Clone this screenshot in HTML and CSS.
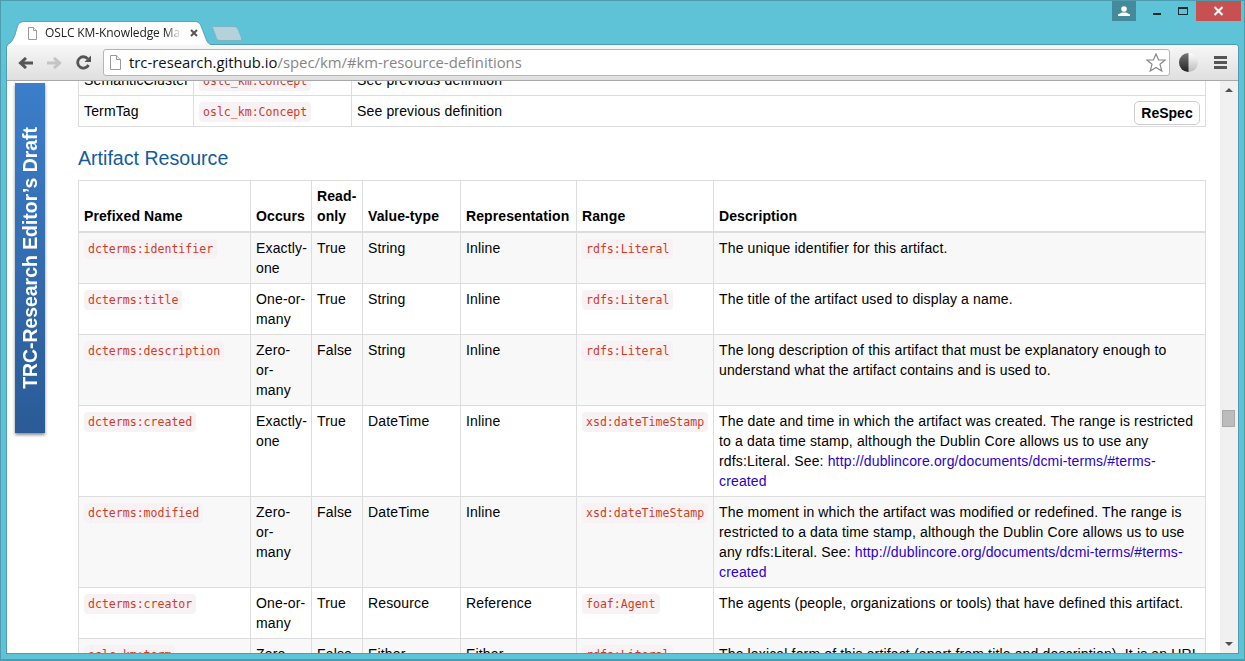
FILE: index.html
```html
<!DOCTYPE html>
<html lang="en">
<head>
<meta charset="utf-8">
<title>OSLC KM-Knowledge Management</title>
<link rel="stylesheet" href="styles.css">
</head>
<body>
<div class="window">
  <div class="caption">
    <div class="tabs">
      <div class="tab">
        <svg class="tab-shape" width="205" height="24" viewBox="0 0 205 24"><path d="M0 24C4 22 6 19 8 14L10.500 5C11.500 2 14 .5 17 .5H188C191 .5 193 2 194 5L199 18C200 21 202 23.500 205 24Z" fill="#fff"/><path d="M0 24C4 22 6 19 8 14L10.500 5C11.500 2 14 .5 17 .5H188C191 .5 193 2 194 5L199 18C200 21 202 23.500 205 24" fill="none" stroke="#4d8e9f" stroke-opacity=".75"/></svg>
        <svg class="doc-icon" width="9" height="13" viewBox="0 0 9 13"><path d="M.5.5H5.500L8.500 3.500V12.500H.5Z" fill="#fff" stroke="#999"/><path d="M5.500.5V3.500H8.500" fill="#eee" stroke="#999"/></svg>
        <span class="tab-title">OSLC KM-Knowledge Mar</span>
        <svg class="tab-close" width="8" height="8" viewBox="0 0 8 8"><path d="M1 1L7 7M7 1L1 7" stroke="#555" stroke-width="2"/></svg>
      </div>
      <svg class="newtab" width="30" height="15" viewBox="0 0 30 15"><path d="M.5 1.500C.5 .8 1 .5 1.500 .5H22C24 .5 25 1.500 26 3L29.500 12C30 14 29 14.500 28 14.500H8C6 14.500 5 13.500 4.500 12.500Z" fill="#b4d2dc" stroke="#7fb3c2"/></svg>
    </div>
    <div class="controls">
      <div class="ctl-user"><svg width="12" height="10" viewBox="0 0 12 10"><circle cx="6" cy="3" r="2.800" fill="#fff"/><path d="M0 10V8.500L4 6.500H8L12 8.500V10Z" fill="#fff"/></svg></div>
      <div class="ctl-min"><span class="min-bar"></span></div>
      <div class="ctl-max"><span class="max-box"></span></div>
      <div class="ctl-close"><svg width="11" height="10" viewBox="0 0 11 10"><path d="M1.500 1L9.500 9M9.500 1L1.500 9" stroke="#fff" stroke-width="2"/></svg></div>
    </div>
  </div>
  <div class="browser">
    <div class="toolbar">
      <svg class="nav-btn" width="15" height="12" viewBox="0 0 15 12"><path d="M15 6H4M8 1L2.500 6L8 11" fill="none" stroke="#555" stroke-width="3"/></svg>
      <svg class="nav-btn" width="15" height="12" viewBox="0 0 15 12"><path d="M0 6H11M7 1L12.500 6L7 11" fill="none" stroke="#c4c4c4" stroke-width="3"/></svg>
      <svg class="nav-btn" width="15" height="15" viewBox="0 0 15 15"><path d="M12.500 10A5.700 5.700 0 1 1 11.800 3.800" fill="none" stroke="#555" stroke-width="2.800"/><path d="M15 .5V7H8.500Z" fill="#555"/></svg>
      <div class="omnibox">
        <svg class="omni-doc" width="11" height="15" viewBox="0 0 11 15"><path d="M.5.5H6.500L10.500 4.500V14.500H.5Z" fill="#fff" stroke="#999"/><path d="M6.500.5V4.500H10.500" fill="#eee" stroke="#999"/></svg>
        <span class="url"><span class="url-host">trc-research.github.io</span>/spec/km/#km-resource-definitions</span>
        <svg class="star" width="20" height="19" viewBox="0 0 20 19"><path d="M10 1L12.600 7H19L14 11.300L15.800 18L10 14.400L4.200 18L6 11.300L1 7H7.400Z" fill="#fff" stroke="#888" stroke-width="1.200"/></svg>
      </div>
      <svg class="theme-btn" width="19" height="19" viewBox="0 0 19 19"><defs><linearGradient id="dk" x1="0" y1="0" x2="0" y2="1"><stop offset="0" stop-color="#777"/><stop offset="1" stop-color="#222"/></linearGradient><linearGradient id="lt" x1="0" y1="0" x2="0" y2="1"><stop offset="0" stop-color="#fff"/><stop offset="1" stop-color="#bbb"/></linearGradient></defs><circle cx="9.500" cy="9.500" r="9.500" fill="url(#lt)"/><path d="M9.500 0A9.500 9.500 0 0 0 9.500 19Z" fill="url(#dk)"/></svg>
      <div class="menu-btn"><span></span><span></span><span></span></div>
    </div>
    <div class="viewport">
      <div class="draft-banner"><span class="draft-text">TRC-Research Editor’s Draft</span></div>
      <button class="respec">ReSpec</button>
      <div class="page">
        <div class="content">
          <table class="table table-top">
            <colgroup><col class="t1"><col class="t2"><col class="t3"></colgroup>
            <tbody>
              <tr><td>SemanticCluster</td><td><code>oslc_km:Concept</code></td><td>See previous definition</td></tr>
              <tr><td>TermTag</td><td><code>oslc_km:Concept</code></td><td>See previous definition</td></tr>
            </tbody>
          </table>
          <h3 class="section-title">Artifact Resource</h3>
          <table class="table table-main">
            <colgroup><col class="c1"><col class="c2"><col class="c3"><col class="c4"><col class="c5"><col class="c6"><col class="c7"></colgroup>
            <thead>
              <tr><th>Prefixed Name</th><th>Occurs</th><th>Read-only</th><th>Value-type</th><th>Representation</th><th>Range</th><th>Description</th></tr>
            </thead>
            <tbody>
              <tr class="odd"><td><code>dcterms:identifier</code></td><td>Exactly-one</td><td>True</td><td>String</td><td>Inline</td><td><code>rdfs:Literal</code></td><td>The unique identifier for this artifact.</td></tr>
              <tr><td><code>dcterms:title</code></td><td>One-or-many</td><td>True</td><td>String</td><td>Inline</td><td><code>rdfs:Literal</code></td><td>The title of the artifact used to display a name.</td></tr>
              <tr class="odd"><td><code>dcterms:description</code></td><td>Zero-or-many</td><td>False</td><td>String</td><td>Inline</td><td><code>rdfs:Literal</code></td><td>The long description of this artifact that must be explanatory enough to understand what the artifact contains and is used to.</td></tr>
              <tr><td><code>dcterms:created</code></td><td>Exactly-one</td><td>True</td><td>DateTime</td><td>Inline</td><td><code>xsd:dateTimeStamp</code></td><td>The date and time in which the artifact was created. The range is restricted to a data time stamp, although the Dublin Core allows us to use any rdfs:Literal. See: <a href="#terms-created">http://dublincore.org/documents/dcmi-terms/#terms-created</a></td></tr>
              <tr class="odd"><td><code>dcterms:modified</code></td><td>Zero-or-many</td><td>False</td><td>DateTime</td><td>Inline</td><td><code>xsd:dateTimeStamp</code></td><td>The moment in which the artifact was modified or redefined. The range is restricted to a data time stamp, although the Dublin Core allows us to use any rdfs:Literal. See: <a href="#terms-created">http://dublincore.org/documents/dcmi-terms/#terms-created</a></td></tr>
              <tr><td><code>dcterms:creator</code></td><td>One-or-many</td><td>True</td><td>Resource</td><td>Reference</td><td><code>foaf:Agent</code></td><td>The agents (people, organizations or tools) that have defined this artifact.</td></tr>
              <tr class="odd"><td><code>oslc_km:term</code></td><td>Zero-or-many</td><td>False</td><td>Either</td><td>Either</td><td><code>rdfs:Literal</code></td><td>The lexical form of this artifact (apart from title and description). It is an URI</td></tr>
            </tbody>
          </table>
        </div>
      </div>
      <div class="scrollbar">
        <span class="arrow-up"></span>
        <div class="track"><span class="thumb"></span></div>
        <span class="arrow-down"></span>
      </div>
    </div>
  </div>
</div>
</body>
</html>
```

FILE: styles.css
```css
* { box-sizing: border-box; }
html, body { margin: 0; height: 661px; overflow: hidden; }
body { font-family: "Liberation Sans", Arial, sans-serif; font-size: 14px; line-height: 20px; color: #000; background: #5fc3d8; }

.window { width: 1245px; height: 661px; display: flex; flex-direction: column; border: 1px solid #4c9cae; border-bottom-width: 2px; padding: 0 6px 6px 6px; background: #5fc3d8; }

.caption { height: 44px; flex: none; display: flex; justify-content: space-between; }
.tabs { display: flex; align-items: flex-end; }
.tab { position: relative; width: 205px; height: 24px; display: flex; align-items: center; padding-left: 21px; z-index: 1; }
.tab-shape { position: absolute; left: 0; top: 0; }
.doc-icon { position: relative; margin-right: 8px; flex: none; }
.tab-title { position: relative; width: 137px; overflow: hidden; white-space: nowrap; font-family: "Open Sans", sans-serif; font-size: 12px; color: #222; letter-spacing: -.1px; -webkit-mask-image: linear-gradient(to right, #000 88%, transparent); mask-image: linear-gradient(to right, #000 88%, transparent); }
.tab-close { position: relative; margin-left: 8px; flex: none; }
.newtab { margin-bottom: 4px; }

.controls { display: flex; height: 20px; margin-right: -3px; }
.ctl-user { width: 24px; background: #458a9a; display: flex; align-items: center; justify-content: center; margin-right: 8px; }
.ctl-min { width: 26px; display: flex; justify-content: center; align-items: flex-end; padding-bottom: 6px; }
.min-bar { width: 8px; height: 2px; background: #1c2a2e; }
.ctl-max { width: 26px; display: flex; justify-content: center; align-items: center; }
.max-box { width: 10px; height: 8px; border: 1px solid #1c2a2e; border-top-width: 2px; }
.ctl-close { width: 45px; background: #c75050; display: flex; align-items: center; justify-content: center; }

.browser { flex: 1; min-height: 0; display: flex; flex-direction: column; border-radius: 3px 3px 0 0; box-shadow: 0 0 0 1px rgba(60,110,125,.45); background: #fff; }

.toolbar { height: 36px; flex: none; display: flex; align-items: center; padding-left: 11px; background: linear-gradient(#f7f7f7, #dfdfdf); border-bottom: 1px solid #a8a8a8; border-radius: 3px 3px 0 0; }
.nav-btn { margin-right: 14px; flex: none; }
.omnibox { width: 1067px; height: 27px; margin-left: -2px; display: flex; align-items: center; padding: 0 3px 0 6px; background: #fff; border: 1px solid #b5b5b5; border-radius: 3px; flex: none; }
.omni-doc { flex: none; }
.url { flex: 1; padding-left: 8px; margin-top: -1px; font-family: "Open Sans", sans-serif; font-size: 14.85px; color: #868686; white-space: nowrap; }
.url-host { color: #111; }
.star { flex: none; }
.theme-btn { flex: none; margin-left: 9px; }
.menu-btn { width: 13px; margin-left: 16px; display: flex; flex-direction: column; gap: 2px; flex: none; }
.menu-btn span { height: 3px; background: #555; }

.viewport { flex: 1; min-height: 0; position: relative; display: flex; overflow: hidden; background: #fff; }
.page { flex: 1; min-width: 0; overflow: hidden; }
.content { margin: -17px 0 0 71px; width: 1128px; }

.draft-banner { position: absolute; left: 8px; top: 2px; width: 30px; height: 350px; display: flex; align-items: center; justify-content: center; background: linear-gradient(#3c7ecb, #2a5b96); box-shadow: 0 2px 3px rgba(0,0,0,.45); }
.draft-text { writing-mode: vertical-rl; transform: rotate(180deg); font-size: 19.4px; font-weight: 700; color: #fff; white-space: nowrap; }

.respec { position: absolute; left: 1127px; top: 20px; width: 66px; height: 24px; padding: 0; background: #fff; border: 1px solid #ccc; border-radius: 5px; font-family: "Liberation Sans", sans-serif; font-size: 14px; font-weight: 700; color: #000; }

.table { width: 100%; table-layout: fixed; border-collapse: collapse; }
.table td, .table th { padding: 5px; border: 1px solid #ddd; vertical-align: top; text-align: left; }
.table td { letter-spacing: .15px; }
.table th { vertical-align: bottom; border-bottom-width: 2px; letter-spacing: .1px; }
.odd { background: #f8f8f8; }
.t1 { width: 115px; } .t2 { width: 158px; }
.c1 { width: 172px; } .c2 { width: 61px; } .c3 { width: 51px; } .c4 { width: 98px; } .c5 { width: 116px; } .c6 { width: 137px; }

code { font-family: "DejaVu Sans Mono", monospace; font-size: 11.55px; line-height: 1; letter-spacing: 0; padding: 3px 4px; background: #f9f2f4; color: #d03c28; border-radius: 4px; }
a { color: #2a00d0; text-decoration: none; }

.section-title { margin: 20px 0 11px; font-size: 19.6px; line-height: 22px; font-weight: 400; color: #135c9b; }

.scrollbar { width: 18px; flex: none; position: relative; background: #f0f0f0; display: flex; flex-direction: column; align-items: center; }
.arrow-up { position: absolute; top: 7px; left: 5px; border: 4px solid transparent; border-top-width: 0; border-bottom: 4px solid #505050; }
.arrow-down { position: absolute; bottom: 7px; left: 5px; border: 4px solid transparent; border-bottom-width: 0; border-top: 4px solid #505050; }
.track { flex: 1; width: 100%; }
.thumb { position: absolute; left: 2px; top: 329px; width: 13px; height: 17px; background: #bcbcbc; border: 1px solid #a9a9a9; }
```
